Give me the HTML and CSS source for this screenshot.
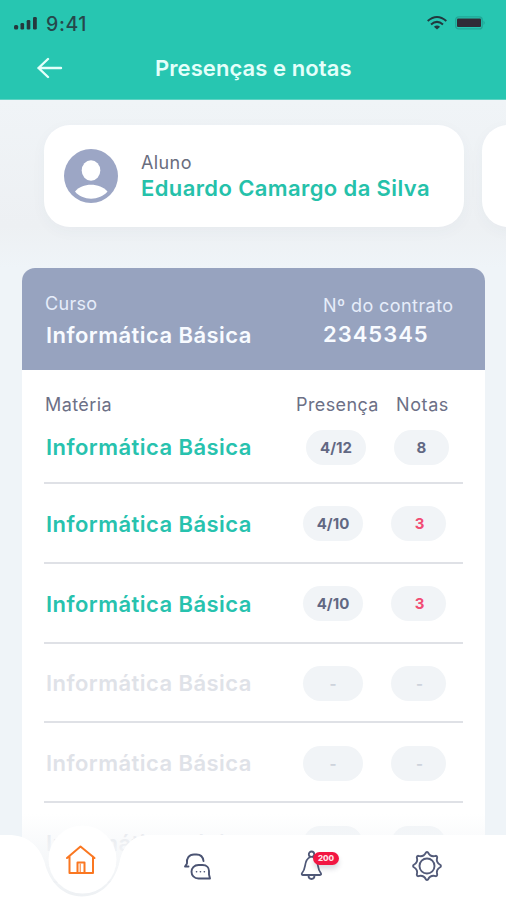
FILE: index.html
```html
<!DOCTYPE html>
<html lang="pt-BR">
<head>
<meta charset="utf-8">
<title>Presenças e notas</title>
<link rel="stylesheet" href="styles.css">
</head>
<body>
<div class="screen">
  <header class="header">
    <div class="status">
      <svg class="signal" width="24" height="14" viewBox="0 0 24 14"><g fill="#25383d"><rect x="0" y="9" width="4.2" height="4.5" rx="1.500"/><rect x="6.500" y="7" width="3.600" height="6.500" rx="1.200"/><rect x="12.700" y="4" width="3.600" height="9.500" rx="1.200"/><rect x="19" y="1" width="3.800" height="12.500" rx="1.200"/></g></svg>
      <span class="clock">9:41</span>
      <svg class="wifi" width="20" height="14" viewBox="0 0 20 14"><g fill="none" stroke="#22383e" stroke-width="2"><path d="M.7 5.100Q10-3 19.300 5.100"/><path d="M4 8.400Q10 3.300 16 8.400"/></g><path d="M6.900 10.700Q10 8.500 13.100 10.700L10 13.600Z" fill="#22383e"/></svg>
      <svg class="battery" width="32" height="14" viewBox="0 0 32 14"><rect x=".7" y=".9" width="26.500" height="12" rx="3" fill="none" stroke="#20a797" stroke-width="1.400"/><rect x="2" y="2.500" width="24" height="8.500" rx="1" fill="#302c36"/><path d="M28.500 4.500Q31 6.800 28.500 9Z" fill="#20a797"/></svg>
    </div>
    <div class="titlebar">
      <svg class="back" width="26" height="22" viewBox="0 0 26 22" fill="none" stroke="#e4fffa" stroke-width="2.400" stroke-linecap="round" stroke-linejoin="round"><path d="M24 11H1.500M11 2L1.500 11L11 20"/></svg>
      <h1>Presenças e notas</h1>
    </div>
  </header>

  <section class="students">
    <article class="student">
      <svg class="avatar" width="54" height="54" viewBox="0 0 54 54"><circle cx="27" cy="27" r="27" fill="#9ca6c5"/><ellipse cx="27" cy="21.500" rx="9.300" ry="10.300" fill="#fff"/><path d="M11 42.500C18 33.500 36 33.500 43.500 42.500C36 52 18 52 11 42.500Z" fill="#fff"/></svg>
      <div class="student-text">
        <span class="label">Aluno</span>
        <strong class="student-name">Eduardo Camargo da Silva</strong>
      </div>
    </article>
    <article class="student next"></article>
  </section>

  <main class="course">
    <div class="course-head">
      <div class="course-name"><span>Curso</span><strong>Informática Básica</strong></div>
      <div class="contract"><span>Nº do contrato</span><strong>2345345</strong></div>
    </div>
    <div class="course-body">
      <div class="columns"><span class="c-subject">Matéria</span><span class="c-presence">Presença</span><span class="c-grade">Notas</span></div>
      <div class="row first"><span class="subject">Informática Básica</span><span class="pill presence">4/12</span><span class="pill grade">8</span></div>
      <div class="row"><span class="subject">Informática Básica</span><span class="pill presence">4/10</span><span class="pill grade low">3</span></div>
      <div class="row"><span class="subject">Informática Básica</span><span class="pill presence">4/10</span><span class="pill grade low">3</span></div>
      <div class="row off"><span class="subject">Informática Básica</span><span class="pill presence">-</span><span class="pill grade">-</span></div>
      <div class="row off"><span class="subject">Informática Básica</span><span class="pill presence">-</span><span class="pill grade">-</span></div>
      <div class="row off"><span class="subject">Informática Básica</span><span class="pill presence">-</span><span class="pill grade">-</span></div>
    </div>
  </main>

  <nav class="nav">
    <svg class="nav-shape" width="506" height="100" viewBox="0 0 506 100">
      <defs>
        <linearGradient id="fade" x1="0" y1="0" x2="0" y2="1"><stop offset="0" stop-color="#f5f7f9" stop-opacity="0"/><stop offset=".4" stop-color="#f5f7f9" stop-opacity=".75"/><stop offset="1" stop-color="#edf0f3"/></linearGradient>
      </defs>
      <rect x="22" y="14" width="463" height="86" fill="url(#fade)"/>
      <path d="M0 35H8C27 35 39 45 44.500 62C49 82 63 96.500 82 96.500S115 82 119.500 62C123 45 133 35 150 35H506V100H0Z" fill="#fff"/>
      <circle cx="82.500" cy="59.500" r="34" fill="#fff"/>
    </svg>
    <div class="nav-items">
      <a class="nav-item"><svg width="32" height="32" viewBox="0 0 32 32" fill="none" stroke="#fa7721" stroke-width="2" stroke-linejoin="round" stroke-linecap="round"><path d="M2 14L15.500 2.500L29.500 14M4.500 12.500V29H28V12.500M12.500 28.500V18.500H19.500V28.500"/><path d="M15.200 28V20" stroke-width="1"/></svg></a>
      <a class="nav-item"><svg class="chat" width="30" height="30" viewBox="0 0 30 30" fill="none" stroke="#4b5473" stroke-width="1.900" stroke-linejoin="round" stroke-linecap="round"><path d="M5.500 15.500H2L4 12.500C3.200 7.500 6 3.500 11 3.500H13.500C18 3.500 20 6 20.500 10"/><path d="M15.500 14H19.500C24 14 26 17 26 20V23.500L27 27.500H15.500C11 27.500 8.500 24 8.500 20.700S11 14 15.500 14Z"/><path d="M13.500 20.800H13.600M17.400 20.800H17.500M21.300 20.800H21.400" stroke-width="1.600"/></svg></a>
      <a class="nav-item bell"><svg width="28" height="32" viewBox="0 0 28 32" fill="none" stroke="#4f5877" stroke-width="1.800" stroke-linejoin="round"><circle cx="13.500" cy="4.200" r="2.700"/><path d="M12.500 7C8.500 8.500 7.500 12 7 16Q6.500 20 3.800 23.500Q3.500 25 5 25H22Q23.500 25 23 23.500Q20.500 20 20 16C19.500 12 18.500 8.500 14.500 7M10.500 25.500Q10.500 29 13.500 29T16.500 25.500"/></svg><span class="badge">200</span></a>
      <a class="nav-item"><svg width="32" height="32" viewBox="0 0 32 32" fill="none" stroke="#535b79" stroke-width="1.900" stroke-linejoin="round"><path d="M29.500 15Q30.400 16 29.500 17Q24.600 19.600 26.200 24.800Q26 26 24.800 26.200Q19.600 24.600 17 29.500Q16 30.400 15 29.500Q12.400 24.600 7.200 26.200Q6 26 5.800 24.800Q7.400 19.600 2.500 17Q1.600 16 2.500 15Q7.400 12.400 5.800 7.200Q6 6 7.200 5.800Q12.400 7.400 15 2.500Q16 1.600 17 2.500Q19.600 7.400 24.800 5.800Q26 6 26.200 7.200Q24.600 12.400 29.500 15Z"/><circle cx="16" cy="16" r="7.500"/></svg></a>
    </div>
  </nav>
</div>
</body>
</html>
```

FILE: styles.css
```css
* { box-sizing: border-box; }
body { margin: 0; font-family: Inter, "Liberation Sans", sans-serif; }
.screen { position: relative; width: 506px; height: 900px; overflow: hidden; background: #eff4f8; }

.header { height: 100px; background: #27c6b1; border-bottom: 1px solid #5fd3c3; }
.status { display: flex; align-items: center; height: 46px; padding: 0 19px 0 14px; }
.clock { margin-left: 8px; padding-top: 1px; font-size: 19.500px; font-weight: 500; letter-spacing: .6px; color: #26474b; }
.wifi { margin-left: auto; }
.battery { margin-left: 8px; }
.titlebar { display: flex; align-items: center; height: 44px; padding-left: 37px; }
.titlebar h1 { margin: 0 0 0 92px; font-size: 22px; font-weight: 600; letter-spacing: .08px; color: #e4fffa; white-space: nowrap; }

.students { display: flex; gap: 18px; width: 560px; padding: 25px 0 0 44px; background: linear-gradient(#f0f4f7, #edf0f3 75%, #eff4f8); height: 168px; }
.student { display: flex; align-items: center; flex: none; width: 420px; height: 102px; padding-left: 20px; border-radius: 26px; background: #fff; box-shadow: 0 4px 16px rgba(70, 80, 100, .035); }
.avatar { flex: none; }
.student-text { display: flex; flex-direction: column; margin-left: 23px; white-space: nowrap; }
.label { font-size: 18px; line-height: 24px; letter-spacing: .4px; color: #696d7e; }
.student-name { font-size: 22px; line-height: 27px; font-weight: 600; letter-spacing: .39px; color: #25c1aa; }

.course { width: 463px; height: 640px; margin-left: 22px; border-radius: 13px; overflow: hidden; background: #fff; }
.course-head { display: flex; height: 102px; padding: 22px 0 0 24px; background: #97a3bf; white-space: nowrap; }
.course-head div { display: flex; flex-direction: column; }
.course-name { width: 277px; }
.course-name span, .contract span { font-size: 18px; line-height: 27px; letter-spacing: .42px; color: #e6edfa; }
.course-name span { letter-spacing: .3px; margin-left: -1px; }
.course-head strong { font-size: 22px; font-weight: 600; letter-spacing: .45px; color: #f8fbff; }
.course-name strong { line-height: 37px; }
.contract { padding-top: 2px; }
.contract strong { line-height: 31px; letter-spacing: 1px; }

.course-body { padding: 20px 22px 0; }
.columns { display: flex; height: 28px; font-size: 18px; line-height: 29px; letter-spacing: .4px; color: #6c7086; white-space: nowrap; }
.c-subject { width: 252px; padding-left: 1px; }
.c-presence { width: 100px; }
.c-grade { letter-spacing: .6px; }
.row { display: flex; align-items: center; height: 79.800px; padding-top: 2px; border-bottom: 2px solid #dfe1e6; }
.row.first { height: 66px; padding: 0 0 6px 0; }
.subject { width: 259px; padding-left: 2px; font-size: 22px; font-weight: 600; letter-spacing: .45px; color: #27c2ae; white-space: nowrap; }
.pill { height: 35px; border-radius: 18px; background: #f1f4f7; text-align: center; font-size: 15px; line-height: 35px; font-weight: 700; color: #626883; }
.presence { width: 60px; }
.grade { width: 55px; margin-left: 28px; padding-left: 2px; }
.first .presence { margin-left: 3px; }
.first .grade { padding-left: 0; }
.low { color: #f14c74; }
.off .subject { color: #dfe2e8; }
.off .pill { color: #ced3dc; }

.nav { position: absolute; left: 0; bottom: 0; width: 506px; height: 100px; }
.nav-shape { display: block; }
.nav-items { position: absolute; left: 24px; top: 35px; display: grid; grid-template-columns: repeat(4, 115px); height: 65px; }
.nav-item { position: relative; display: flex; justify-content: center; padding-top: 15px; }
.nav-item:first-child { padding: 9px 1px 0 0; }
.chat { margin: 1px 0 0 3px; }
.badge { position: absolute; left: 59px; top: 17px; width: 26px; height: 13px; border-radius: 7px; background: #f21642; color: #ffe1e7; text-align: center; font-size: 8px; line-height: 13px; font-weight: 800; box-shadow: 0 4px 5px rgba(50, 60, 90, .18); }
```
